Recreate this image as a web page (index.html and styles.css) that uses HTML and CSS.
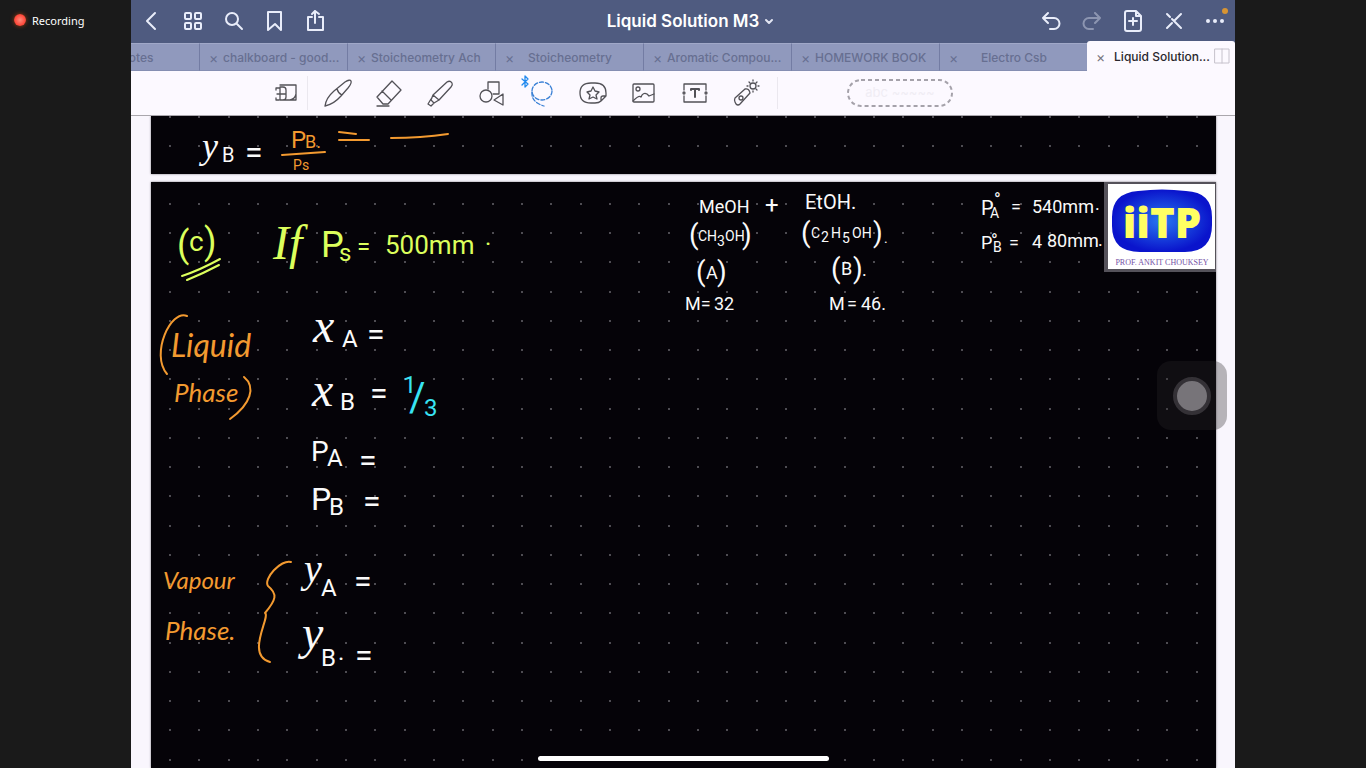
FILE: index.html
```html
<!DOCTYPE html>
<html lang="en">
<head>
<meta charset="utf-8">
<title>Liquid Solution M3</title>
<link rel="stylesheet" href="styles.css">
</head>
<body>
<div class="screen">
  <aside class="recording"><span class="recording-dot"></span>Recording</aside>
  <main class="app">
    <header class="titlebar">
      <nav class="bar-actions">
        <button aria-label="Back"><svg viewBox="0 0 24 24"><path d="M15 4L7 12l8 8"/></svg></button>
        <button aria-label="Thumbnails"><svg viewBox="0 0 24 24"><rect x="4" y="4" width="6" height="6" rx="1"/><rect x="14" y="4" width="6" height="6" rx="1"/><rect x="4" y="14" width="6" height="6" rx="1"/><rect x="14" y="14" width="6" height="6" rx="1"/></svg></button>
        <button aria-label="Search"><svg viewBox="0 0 24 24"><circle cx="10" cy="10" r="6"/><path d="M15 15l5 5"/></svg></button>
        <button aria-label="Bookmark"><svg viewBox="0 0 24 24"><path d="M5 3h13v18l-6-6-7 6z"/></svg></button>
        <button aria-label="Share"><svg viewBox="0 0 24 24"><path d="M8 8H4v13h15V8h-4M11 14V2M8 5l3-3 4 3"/></svg></button>
      </nav>
      <div class="title"><h1>Liquid Solution M3</h1><svg class="chevron" viewBox="0 0 14 14"><path d="M5 6l3 3 3-3"/></svg></div>
      <nav class="bar-actions bar-end">
        <button aria-label="Undo"><svg viewBox="0 0 24 24"><path d="M9 4L4 9l5 5M4 9h11a5 5 0 0 1 0 11h-4"/></svg></button>
        <button aria-label="Redo" class="faded"><svg viewBox="0 0 24 24"><path d="M15 4l5 5-5 5M20 9H9a5 5 0 0 0 0 11h4"/></svg></button>
        <button aria-label="Add page"><svg viewBox="0 0 24 24"><path d="M6 2h9l5 5v13a2 2 0 0 1-2 2H6a2 2 0 0 1-2-2V4a2 2 0 0 1 2-2zM15 2v5h5M12 9v7M8 12h8"/></svg></button>
        <button aria-label="Read mode"><svg viewBox="0 0 24 24"><path d="M5 5l3 3M10 10l9 9M19 5l-7 7M10 14l-5 5"/></svg></button>
        <button aria-label="More"><svg viewBox="0 0 24 24"><g class="solid"><circle cx="5" cy="12" r="2"/><circle cx="12" cy="12" r="2"/><circle cx="19" cy="12" r="2"/></g><circle class="alert" cx="22" cy="2" r="3"/></svg></button>
      </nav>
    </header>

    <nav class="tabs">
      <a class="tab" href="#"><span class="close">×</span><span class="label">My Notes</span></a>
      <a class="tab" href="#"><span class="close">×</span><span class="label">chalkboard - good...</span></a>
      <a class="tab" href="#"><span class="close">×</span><span class="label">Stoicheometry Ach</span></a>
      <a class="tab" href="#"><span class="close">×</span><span class="label">Stoicheometry</span></a>
      <a class="tab" href="#"><span class="close">×</span><span class="label">Aromatic Compou...</span></a>
      <a class="tab" href="#"><span class="close">×</span><span class="label">HOMEWORK BOOK</span></a>
      <a class="tab" href="#"><span class="close">×</span><span class="label">Electro Csb</span></a>
      <a class="tab active" href="#"><span class="close">×</span><span class="label">Liquid Solution...</span><svg class="split" viewBox="0 0 16 16"><path d="M1 1h14v14H1zM8 1v14"/></svg></a>
    </nav>

    <div class="toolbar">
      <button class="zoom-tool" aria-label="Zoom window"><svg viewBox="0 0 30 30"><path d="M10 7h16v15H10M10 9h3q3 0 3 3v7q0 3-3 3h-3zM7 16h9M6 20v2h3M6 12v-2h3M26 16q-1 5-6 6"/></svg></button>
      <button aria-label="Pen"><svg viewBox="0 0 30 30"><path d="M2 28Q3 20 11 13L22 4Q27 1 28 3 29 5 25 10L18 18Q11 26 2 28zM14 11q1 4 5 6"/></svg></button>
      <button aria-label="Eraser"><svg viewBox="0 0 30 30"><path d="M18 3l9 9-13 14H9l-6-7zM8 13l9 9M3 28h12"/></svg></button>
      <button aria-label="Highlighter"><svg viewBox="0 0 30 30"><path d="M8 17L22 4q3-2 5 1 1 2-1 4L14 22zM8 17l-2 5 3 3 5-3M6 21l-3 5 3 2 3-3"/></svg></button>
      <button aria-label="Shapes"><svg viewBox="0 0 30 30"><path d="M12 11V4h11v12h-6M27 16v11l-9-5z"/><circle cx="10" cy="18" r="6"/></svg></button>
      <button class="lasso" aria-label="Lasso"><svg viewBox="0 0 30 30"><ellipse cx="15" cy="13" rx="10" ry="9"/><path d="M5 14q-1 10 12 14"/><path class="bluetooth" d="M-5 1l6 5-3 3V-2l3 3-6 6"/></svg></button>
      <button aria-label="Elements"><svg viewBox="0 0 30 30"><path d="M23 23q-2 2-6 2h-4Q2 25 2 15T13 5h4q11 0 11 10v3zM23 23v-3q0-2 2-2h3M15 9l2 4 4 1-3 3 1 4-4-2-4 2 1-4-3-3 4-1z"/></svg></button>
      <button aria-label="Image"><svg viewBox="0 0 30 30"><rect x="4" y="6" width="21" height="18" rx="1"/><circle cx="9" cy="11" r="2"/><path d="M4 23q6-6 8-4 2-5 6-3l2 2 5-2"/></svg></button>
      <button aria-label="Text"><svg viewBox="0 0 30 30"><path d="M4 12V6h22v6M4 18v6h22v-6"/><circle cx="4" cy="15" r="1"/><circle cx="26" cy="15" r="1"/><path class="heavy" d="M11 12v-1h8v1M15 11v8"/></svg></button>
      <button aria-label="Laser pointer"><svg viewBox="0 0 30 30"><path d="M4 20L14 11q4-1 5 4L9 26q-2 2-4 0l-1-2q-1-2 0-4z"/><circle cx="10" cy="20" r="2"/><circle cx="22" cy="8" r="3"/><path d="M22 2v1M22 13v1M16 8h1M27 8h1M18 4l1 1M25 11l1 1M26 4l-1 1"/></svg></button>
      <span class="divider"></span>
      <div class="lasso-hint"><svg><rect x="1" y="1" width="104" height="26" rx="13"/></svg>abc ~~~~~</div>
    </div>

    <section class="canvas">
      <div class="sheet sheet-previous">
        <svg class="ink">
          <defs>
            <pattern id="dots-a" x="18" y="0" width="88" height="117" patternUnits="userSpaceOnUse">
              <g class="dot"><circle cx="1" cy="1" r="1"/><circle cx="30" cy="1" r="1"/><circle cx="60" cy="1" r="1"/><circle cx="1" cy="30" r="1"/><circle cx="30" cy="30" r="1"/><circle cx="60" cy="30" r="1"/></g>
            </pattern>
          </defs>
          <rect width="100%" height="100%" fill="url(#dots-a)"/>
          <g transform="translate(-151 -116)">
            <text class="white"><tspan class="script s36" x="202" y="158">y</tspan><tspan class="s20" x="222" y="162">B</tspan><tspan class="s32" x="245" y="163">=</tspan></text>
            <text class="orange"><tspan class="s24" x="291" y="148">P</tspan><tspan class="s18" x="305" y="148">B.</tspan><tspan class="s14" x="293" y="170">P</tspan><tspan class="s14" x="302" y="170">s</tspan></text>
            <path class="orange-line" d="M282 155l43-3M339 132l17 2M339 140h30M391 138q30 0 57-4"/>
          </g>
        </svg>
      </div>
      <div class="sheet sheet-current">
        <svg class="ink">
          <defs>
            <pattern id="dots-b" x="18" y="21" width="88" height="117" patternUnits="userSpaceOnUse">
              <g class="dot"><circle cx="1" cy="1" r="1"/><circle cx="30" cy="1" r="1"/><circle cx="60" cy="1" r="1"/><circle cx="1" cy="30" r="1"/><circle cx="30" cy="30" r="1"/><circle cx="60" cy="30" r="1"/><circle cx="1" cy="59" r="1"/><circle cx="30" cy="59" r="1"/><circle cx="60" cy="59" r="1"/><circle cx="1" cy="89" r="1"/><circle cx="30" cy="89" r="1"/><circle cx="60" cy="89" r="1"/></g>
            </pattern>
          </defs>
          <rect width="100%" height="100%" fill="url(#dots-b)"/>
          <g transform="translate(-151 -182)">
            <text class="green"><tspan class="s36" x="177" y="257">(</tspan><tspan class="s28" x="189" y="251">c</tspan><tspan class="s36" x="204" y="254">)</tspan></text>
            <path class="green-line" d="M182 276q18-6 38-17M187 280q17-7 32-15"/>
            <text class="green"><tspan class="script s48" x="273" y="259">If</tspan><tspan class="s36" x="321" y="257">P</tspan><tspan class="s24" x="339" y="261">s</tspan><tspan class="s24" x="357" y="255">=</tspan><tspan class="s26" x="385" y="254">500mm</tspan><tspan class="s24" x="485" y="245">.</tspan></text>

            <path class="orange-line" d="M187 316c-16-7-37 38-20 58M244 377c12 10 7 27-14 42"/>
            <text class="orange words"><tspan class="s32" x="171" y="357">Liquid</tspan><tspan class="s26" x="174" y="402">Phase</tspan></text>
            <text class="white"><tspan class="script s48" x="313" y="342">x</tspan><tspan class="s24" x="342" y="347">A</tspan><tspan class="s32" x="367" y="345">=</tspan></text>
            <text class="white"><tspan class="script s48" x="312" y="406">x</tspan><tspan class="s24" x="340" y="410">B</tspan><tspan class="s32" x="370" y="404">=</tspan></text>
            <text class="cyan"><tspan class="s24" x="403" y="393">1</tspan><tspan class="s40" x="409" y="411">/</tspan><tspan class="s24" x="424" y="416">3</tspan></text>
            <text class="white"><tspan class="s28" x="311" y="461">P</tspan><tspan class="s24" x="327" y="466">A</tspan><tspan class="s32" x="359" y="471">=</tspan></text>
            <text class="white"><tspan class="s32" x="311" y="510">P</tspan><tspan class="s24" x="329" y="515">B</tspan><tspan class="s32" x="363" y="512">=</tspan></text>

            <text class="orange words"><tspan class="s24" x="163" y="589">Vapour</tspan><tspan class="s26" x="165" y="640">Phase.</tspan></text>
            <path class="orange-line" d="M291 562c-10-3-28 17-23 24 10 8 8 14-3 27 6 3-20 42 5 49"/>
            <text class="white"><tspan class="script s40" x="304" y="582">y</tspan><tspan class="s24" x="321" y="596">A</tspan><tspan class="s32" x="354" y="592">=</tspan></text>
            <text class="white"><tspan class="script s48" x="302" y="649">y</tspan><tspan class="s24" x="321" y="666">B</tspan><tspan class="s24" x="338" y="660">.</tspan><tspan class="s32" x="355" y="666">=</tspan></text>

            <text class="white"><tspan class="s18" x="699" y="213">MeOH</tspan><tspan class="s24" x="765" y="213">+</tspan><tspan class="s20" x="805" y="209">EtOH.</tspan></text>
            <text class="white"><tspan class="s28" x="689" y="244">(</tspan><tspan class="s14" x="698" y="241">CH</tspan><tspan class="s14" x="717" y="246">3</tspan><tspan class="s14" x="725" y="241">OH</tspan><tspan class="s28" x="742" y="244">)</tspan></text>
            <text class="white"><tspan class="s28" x="801" y="242">(</tspan><tspan class="s14" x="811" y="238">C</tspan><tspan class="s14" x="821" y="242">2</tspan><tspan class="s14" x="831" y="238">H</tspan><tspan class="s14" x="842" y="243">5</tspan><tspan class="s14" x="852" y="238">OH</tspan><tspan class="s28" x="873" y="242">)</tspan><tspan class="s14" x="884" y="243">.</tspan></text>
            <text class="white"><tspan class="s28" x="696" y="281">(</tspan><tspan class="s18" x="706" y="279">A</tspan><tspan class="s28" x="717" y="281">)</tspan><tspan class="s28" x="831" y="278">(</tspan><tspan class="s18" x="841" y="275">B</tspan><tspan class="s28" x="853" y="278">)</tspan><tspan class="s18" x="862" y="276">.</tspan></text>
            <text class="white"><tspan class="s18" x="685" y="310">M=</tspan><tspan class="s18" x="714" y="310">32</tspan><tspan class="s18" x="829" y="310">M</tspan><tspan class="s18" x="847" y="310">=</tspan><tspan class="s18" x="861" y="310">46.</tspan></text>
            <text class="white"><tspan class="s20" x="981" y="215">P</tspan><tspan class="s14" x="990" y="218">A</tspan><tspan class="s18" x="994" y="206">°</tspan><tspan class="s18" x="1011" y="213">=</tspan><tspan class="s18" x="1032" y="213">540mm</tspan><tspan class="s18" x="1095" y="210">.</tspan></text>
            <text class="white"><tspan class="s18" x="981" y="249">P</tspan><tspan class="s14" x="993" y="252">B</tspan><tspan class="s18" x="991" y="247">°</tspan><tspan class="s18" x="1009" y="249">=</tspan><tspan class="s18" x="1032" y="248">4</tspan><tspan class="s18" x="1047" y="247">80mm</tspan><tspan class="s18" x="1098" y="246">.</tspan></text>
          </g>
        </svg>
        <svg class="logo" viewBox="0 0 112 90">
          <defs><radialGradient id="badge"><stop offset="0" stop-color="#2878f0"/><stop offset="1" stop-color="#0a14cc"/></radialGradient></defs>
          <path d="M0 0h112v90H0z" fill="#55525a"/>
          <path d="M4 2h107v85H4z" fill="#fff"/>
          <path d="M34 9Q58 6 82 9q26 1 26 26v8q0 27-27 27H36Q8 70 8 44V35Q8 11 34 9z" fill="url(#badge)"/>
          <text class="logo-name" x="58" y="56" text-anchor="middle">iiTP</text>
          <text class="logo-caption" x="58" y="83" text-anchor="middle">PROF. ANKIT CHOUKSEY</text>
        </svg>
      </div>
      <button class="assistive" aria-label="Assistive touch"><span></span></button>
      <span class="home-indicator"></span>
    </section>
  </main>
</div>
</body>
</html>
```
FILE: styles.css
```css
* { box-sizing: border-box; }
body { margin: 0; background: #1a1a1a; font-family: Inter, "Liberation Sans", sans-serif; }
button { border: 0; padding: 0; background: none; color: inherit; display: flex; align-items: center; justify-content: center; }
svg { fill: none; stroke-linecap: round; stroke-linejoin: round; }

.screen { display: grid; grid-template-columns: 131px 1fr 131px; min-height: 100vh; }
.recording { display: flex; align-items: center; align-self: start; gap: 6px; height: 40px; padding-left: 14px; color: #fff; font: 11px "Noto Sans", sans-serif; }
.recording-dot { width: 12px; height: 12px; border-radius: 50%; background: radial-gradient(#ff8a7a, #ff4a3c 60%, #b03a18); box-shadow: 0 0 4px #a03c10; }
.app { display: flex; flex-direction: column; min-width: 0; background: #f9f6fd; }

.titlebar { display: grid; grid-template-columns: 1fr auto 1fr; height: 43px; padding-bottom: 2px; background: #4f5b80; color: #e9edfa; }
.bar-actions { display: flex; }
.bar-end { justify-content: flex-end; }
.bar-actions button { width: 41px; }
.bar-actions svg { width: 24px; height: 24px; stroke: currentColor; stroke-width: 2; overflow: visible; }
.bar-actions .faded { opacity: .4; }
.bar-actions .solid { fill: currentColor; stroke: none; }
.bar-actions .alert { fill: #d79433; stroke: none; }
.title { display: flex; align-items: center; gap: 2px; padding-left: 16px; }
.title h1 { margin: 0; font-size: 17px; font-weight: 600; color: #fff; white-space: nowrap; }
.chevron { width: 14px; height: 14px; stroke: #e2e5f2; stroke-width: 2; }

.tabs { display: flex; justify-content: flex-end; height: 28px; min-width: 0; background: #9099bd; clip-path: inset(-2px 0 0 0); }
.tab { display: flex; align-items: center; flex: 0 0 148px; min-width: 0; padding: 0 8px 0 9px; border-left: 1px solid #737ca3; border-top: 1px solid #a0a8c8; border-bottom: 1px solid #858eb2; color: #676f91; font-size: 12px; font-weight: 500; text-decoration: none; white-space: nowrap; }
.tab::after { content: ""; flex: 0 1 14px; }
.close { flex: 0 0 14px; font-size: 14px; font-weight: 400; }
.label { flex: 1 0 auto; text-align: center; }
.tab.active { height: 30px; margin-top: -2px; padding-right: 5px; border: 0; border-radius: 3px 3px 0 0; background: #fcf9ff; color: #29272d; }
.tab.active::after { content: none; }
.active .close { color: #77747c; }
.split { width: 16px; height: 16px; stroke: #c6c2cc; }

.toolbar { display: flex; align-items: center; height: 45px; padding-left: 131px; background: #fcf9ff; border-bottom: 1px solid #aaa7ad; }
.toolbar button { flex: 0 0 51px; height: 34px; }
.toolbar .zoom-tool { flex-basis: 46px; margin-right: 4px; border-right: 1px solid #ebe8ef; }
.toolbar button svg { width: 30px; height: 30px; stroke: #525157; stroke-width: 1.3; overflow: visible; }
.toolbar .heavy { stroke-width: 2; }
.toolbar .lasso svg { stroke: #377fd5; stroke-dasharray: 4 2; }
.toolbar .bluetooth { stroke-dasharray: none; stroke: #228aee; }
.divider { width: 1px; height: 32px; margin: 0 69px 0 6px; background: #ebe8ef; }
.lasso-hint { position: relative; width: 106px; height: 28px; color: #f0edf4; font-size: 13px; line-height: 27px; text-align: center; }
.lasso-hint svg { position: absolute; inset: 0; width: 100%; height: 100%; stroke: #a5a2aa; stroke-width: 2; stroke-linecap: butt; stroke-dasharray: 4 3; }

.canvas { position: relative; flex: 1; display: flex; flex-direction: column; gap: 8px; padding: 0 19px 0 20px; overflow: hidden; }
.sheet { position: relative; background: #050308; box-shadow: 0 0 2px #77747c; }
.sheet-previous { height: 58px; }
.sheet-current { flex: 1; min-height: 520px; }
.ink { position: absolute; inset: 0; width: 100%; height: 100%; stroke-width: 2; }
.dot { fill: #66646a; }
.ink text { font-family: Roboto, Lato, sans-serif; }
.ink .script { font-family: "Liberation Serif", serif; font-style: italic; }
.ink .words { font-family: Lato, sans-serif; font-style: italic; }
.white { fill: #fafafa; }
.green { fill: #dcff5c; }
.orange { fill: #f39a30; }
.cyan { fill: #38e3f3; }
.orange-line { stroke: #f39a30; }
.green-line { stroke: #dcff5c; }
.s14 { font-size: 14px; }
.s18 { font-size: 18px; }
.s20 { font-size: 20px; }
.s24 { font-size: 24px; }
.s26 { font-size: 26px; }
.s28 { font-size: 28px; }
.s32 { font-size: 32px; }
.s36 { font-size: 36px; }
.s40 { font-size: 40px; }
.s48 { font-size: 48px; }

.logo { position: absolute; top: 0; right: 0; width: 112px; height: 90px; }
.logo-name { fill: #ffff62; font: 800 42px "Open Sans", sans-serif; }
.logo-caption { fill: #7451a6; font: 8px "Liberation Serif", serif; }

.assistive { position: absolute; top: 245px; right: 8px; width: 70px; height: 69px; border-radius: 14px; background: rgba(40, 38, 40, .32); }
.assistive span { width: 38px; height: 38px; border: 4px solid #343136; border-radius: 50%; background: #777479; }
.home-indicator { position: absolute; left: 50%; bottom: 7px; width: 291px; height: 5px; margin-left: -145px; border-radius: 3px; background: #fff; }
```
